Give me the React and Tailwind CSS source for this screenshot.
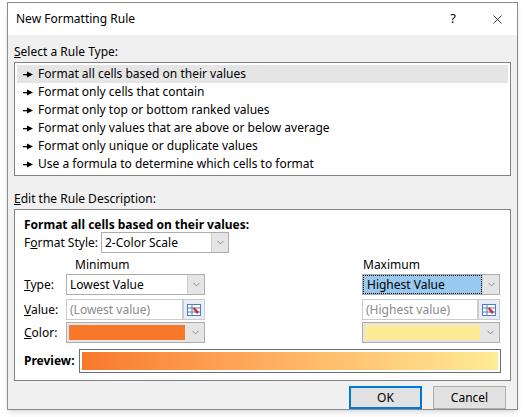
import { X, ChevronDown } from 'lucide-react';

const font = { fontFamily: '"Segoe UI", "Noto Sans", sans-serif' };

function Select({ value, w, selected }) {
  return (
    <div className={`flex h-[21px] border border-[#adadad] bg-white ${w}`}>
      <div className={`flex-1 flex items-center px-[3px] ${selected ? 'bg-[#99c9ef] border border-dotted border-black' : ''}`}>
        <span className="text-[12px] text-black leading-none">{value}</span>
      </div>
      <div className="w-[17px] bg-[#e5e5e5] border-l border-[#cfcfcf] flex items-center justify-center">
        <ChevronDown className="w-[11px] h-[11px] text-[#606060]" strokeWidth={1.5} />
      </div>
    </div>
  );
}

function RefInput({ placeholder, w }) {
  return (
    <div className={`flex h-[21px] ${w}`}>
      <div className="flex-1 border border-[#cccccc] bg-white flex items-center px-[3px]">
        <span className="text-[12px] text-[#8a8a8a] leading-none">{placeholder}</span>
      </div>
      <div className="w-[22px] border border-[#cccccc] bg-[#e8eef7] flex items-center justify-center">
        <svg width="14" height="12" viewBox="0 0 14 12">
          <rect x="0.5" y="0.5" width="13" height="11" fill="#fff" stroke="#4b7fc2" />
          <line x1="0" y1="4" x2="14" y2="4" stroke="#4b7fc2" />
          <line x1="0" y1="8" x2="14" y2="8" stroke="#4b7fc2" />
          <line x1="5" y1="0" x2="5" y2="12" stroke="#4b7fc2" />
          <path d="M7 3 L12 8 L10 10 L6 5 Z" fill="#d9262b" />
        </svg>
      </div>
    </div>
  );
}

function ColorPick({ color, w }) {
  return (
    <div className={`flex h-[21px] border border-[#adadad] bg-[#e5e5e5] ${w}`}>
      <div className="flex-1 p-[2px]">
        <div className={`h-full ${color}`} />
      </div>
      <div className="w-[17px] flex items-center justify-center">
        <ChevronDown className="w-[11px] h-[11px] text-[#606060]" strokeWidth={1.5} />
      </div>
    </div>
  );
}

function Pointer() {
  return (
    <svg width="11" height="7" viewBox="0 0 11 7">
      <rect x="0" y="3" width="5" height="1.3" fill="#000" />
      <path d="M4 0.5 L10 3.6 L4 6.5 Z" fill="#000" />
    </svg>
  );
}

const rules = [
  'Format all cells based on their values',
  'Format only cells that contain',
  'Format only top or bottom ranked values',
  'Format only values that are above or below average',
  'Format only unique or duplicate values',
  'Use a formula to determine which cells to format',
];

export default function App() {
  return (
    <div className="w-[525px] h-[417px] bg-white pl-[7px] pt-[2px] text-[12px] text-black" style={font}>
      <div className="w-[511px] h-[408px] border border-[#8c8c8c] bg-[#f0f0f0] shadow-md flex flex-col">
        <div className="h-[32px] bg-white flex items-center pl-[8px] pr-[12px]">
          <span className="flex-1 text-[12px]">New Formatting Rule</span>
          <span className="text-[13px] mr-[34px]">?</span>
          <X className="w-[15px] h-[15px]" strokeWidth={1.2} />
        </div>
        <div className="px-[6px] pt-[9px] flex flex-col">
          <div className="leading-[15px]"><u>S</u>elect a Rule Type:</div>
          <div className="mt-[3px] h-[114px] border border-[#828282] bg-white p-[2px] flex flex-col">
            {rules.map((r, i) => (
              <div key={r} className={`h-[18px] flex items-center pl-[6px] gap-[4px] ${i === 0 ? 'bg-[#e5e5e5]' : ''}`}>
                <Pointer />
                <span>{r}</span>
              </div>
            ))}
          </div>
          <div className="mt-[15px] leading-[15px]"><u>E</u>dit the Rule Description:</div>
          <div className="mt-[3px] h-[172px] border border-[#828282] bg-white px-[9px] pt-[7px] flex flex-col">
            <div className="font-bold leading-[15px]">Format all cells based on their values:</div>
            <div className="flex items-center">
              <span className="w-[77px]">F<u>o</u>rmat Style:</span>
              <Select value="2-Color Scale" w="w-[128px]" />
            </div>
            <div className="flex mt-[3px]">
              <div className="flex flex-col">
                <div className="pl-[51px] leading-[18px]">Minimum</div>
                <div className="flex items-center gap-0">
                  <span className="w-[42px]"><u>T</u>ype:</span>
                  <Select value="Lowest Value" w="w-[139px]" />
                </div>
                <div className="flex items-center mt-[4px]">
                  <span className="w-[42px]"><u>V</u>alue:</span>
                  <RefInput placeholder="(Lowest value)" w="w-[139px]" />
                </div>
                <div className="flex items-center mt-[2px]">
                  <span className="w-[42px]"><u>C</u>olor:</span>
                  <ColorPick color="bg-[#f8782b]" w="w-[139px]" />
                </div>
              </div>
              <div className="flex flex-col ml-[157px]">
                <div className="pl-[1px] leading-[18px]">Maximum</div>
                <Select value="Highest Value" w="w-[138px]" selected />
                <div className="mt-[4px]"><RefInput placeholder="(Highest value)" w="w-[138px]" /></div>
                <div className="mt-[2px]"><ColorPick color="bg-[#feeb95]" w="w-[138px]" /></div>
              </div>
            </div>
            <div className="flex items-center mt-[6px]">
              <span className="w-[55px] font-bold">Preview:</span>
              <div className="flex-1 h-[24px] border border-[#6d6d6d] p-[2px] bg-white">
                <div className="h-full bg-gradient-to-r from-[#f8782b] to-[#feeb95]" />
              </div>
            </div>
          </div>
          <div className="flex justify-end mt-[5px] gap-[11px] pr-[5px]">
            <button className="w-[73px] h-[23px] border-2 border-[#0078d7] bg-[#e1e1e1] text-[12px]">OK</button>
            <button className="w-[73px] h-[23px] border border-[#adadad] bg-[#e1e1e1] text-[12px]">Cancel</button>
          </div>
        </div>
      </div>
    </div>
  );
}
